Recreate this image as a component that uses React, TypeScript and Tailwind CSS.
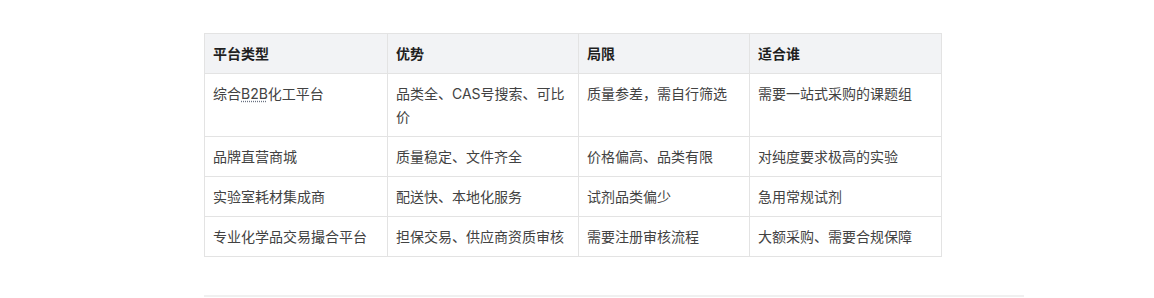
import React from "react";

const rows: { a: React.ReactNode; b: string; c: string; d: string }[] = [
  {
    a: (
      <>
        综合<abbr className="underline decoration-dotted decoration-gray-500 underline-offset-2">B2B</abbr>化工平台
      </>
    ),
    b: "品类全、CAS号搜索、可比价",
    c: "质量参差，需自行筛选",
    d: "需要一站式采购的课题组",
  },
  { a: "品牌直营商城", b: "质量稳定、文件齐全", c: "价格偏高、品类有限", d: "对纯度要求极高的实验" },
  { a: "实验室耗材集成商", b: "配送快、本地化服务", c: "试剂品类偏少", d: "急用常规试剂" },
  { a: "专业化学品交易撮合平台", b: "担保交易、供应商资质审核", c: "需要注册审核流程", d: "大额采购、需要合规保障" },
];

const headers = ["平台类型", "优势", "局限", "适合谁"];
const widths = ["w-[183px]", "w-[191px]", "w-[171px]", "w-[192px]"];

export default function App() {
  return (
    <div
      className="w-[1154px] h-[298px] bg-white overflow-hidden"
      style={{ fontFamily: 'Inter, "Noto Sans CJK SC", sans-serif' }}
    >
      <div className="ml-[204px] w-[820px] pt-[33px]">
        <table className="border-collapse table-fixed w-[737px] text-[14px] leading-[23px] text-[#424242]">
          <colgroup>
            {widths.map((w, i) => (
              <col key={i} className={w} />
            ))}
          </colgroup>
          <thead>
            <tr className="bg-[#f2f3f5]">
              {headers.map((h) => (
                <th
                  key={h}
                  className="border border-[#e3e3e3] px-2 py-2 text-left font-semibold text-[#1f1f1f]"
                >
                  {h}
                </th>
              ))}
            </tr>
          </thead>
          <tbody>
            {rows.map((r, i) => (
              <tr key={i}>
                <td className="border border-[#e3e3e3] px-2 py-2 align-top">{r.a}</td>
                <td className="border border-[#e3e3e3] px-2 py-2 align-top">{r.b}</td>
                <td className="border border-[#e3e3e3] px-2 py-2 align-top">{r.c}</td>
                <td className="border border-[#e3e3e3] px-2 py-2 align-top">{r.d}</td>
              </tr>
            ))}
          </tbody>
        </table>
        <div className="mt-[38px] h-[2px] bg-[#f0f0f0]" />
      </div>
    </div>
  );
}
